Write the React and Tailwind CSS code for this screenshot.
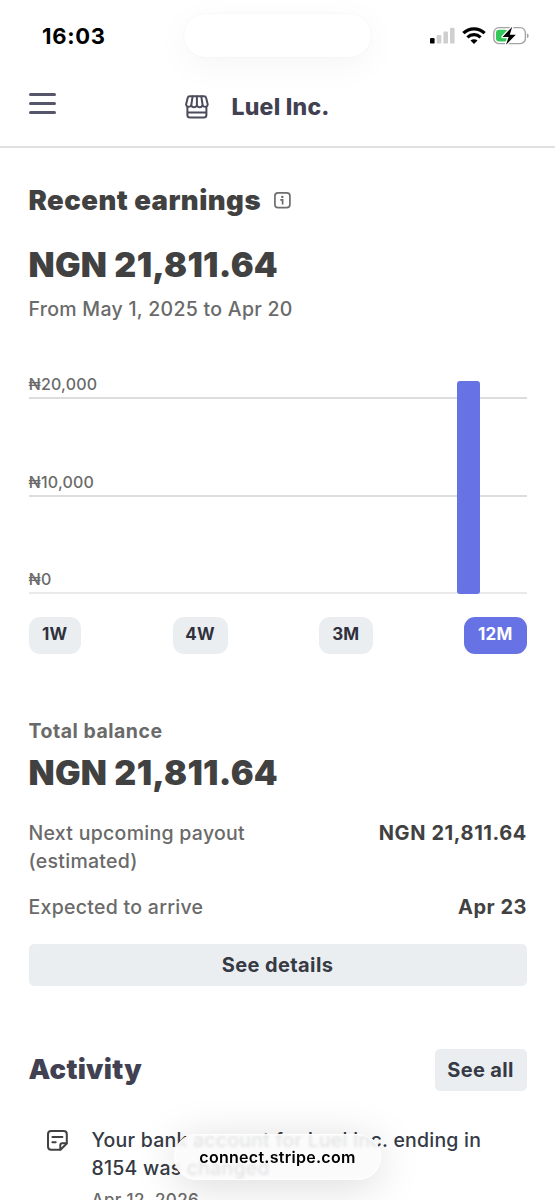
const ranges = ['1W', '4W', '3M', '12M']

const chipWidths = {
  '1W': 'w-[52.5px]',
  '4W': 'w-[55px]',
  '3M': 'w-[53.5px]',
  '12M': 'w-[62.5px]'
}

const gridLines = [
  { label: '₦20,000', color: 'border-[#dcddde]' },
  { label: '₦10,000', color: 'border-[#dcddde]' },
  { label: '₦0', color: 'border-[#e8e9ea]' }
]

const SignalIcon = () => (
  <svg width="25" height="17" viewBox="0 0 25 17">
    <rect x="0" y="11" width="4.6" height="5.6" rx="1.2" fill="#000" />
    <rect x="6.7" y="8" width="4.6" height="8.6" rx="1.2" fill="#cfcfcf" />
    <rect x="13.4" y="4.5" width="4.6" height="12.1" rx="1.2" fill="#cfcfcf" />
    <rect x="20" y="0.8" width="4.6" height="15.8" rx="1.2" fill="#cfcfcf" />
  </svg>
)

const WifiIcon = () => (
  <svg width="24" height="17" viewBox="0 0 24 17" fill="none" stroke="#000">
    <path d="M1.4 6.1a15.2 15.2 0 0 1 21.2 0" strokeWidth="3.3" />
    <path d="M5.4 10.3a9.5 9.5 0 0 1 13.200 0" strokeWidth="3.1" />
    <path d="M8.5 13.6a5 5 0 0 1 7 0L12 17z" fill="#000" stroke="none" />
  </svg>
)

const BatteryIcon = () => (
  <svg width="37" height="20" viewBox="0 0 37 20">
    <rect x="0.8" y="1.6" width="31.6" height="16" rx="5.2" fill="#fff" stroke="#a3a3a3" strokeWidth="1.4" />
    <rect x="3" y="3.8" width="12" height="11.6" rx="3.2" fill="#34c759" />
    <path d="M34.2 7.4c1.8.5 1.8 4.2 0 4.7z" fill="#8f8f8f" />
    <path
      d="M19.2 0.8 9.6 10.9h6l-2.6 7.9 9.8-10.1h-6z"
      fill="#000"
      stroke="#fff"
      strokeWidth="2.6"
      strokeLinejoin="round"
      paintOrder="stroke"
    />
  </svg>
)

const StoreIcon = () => (
  <svg width="24" height="24" viewBox="0 0 24 24" fill="none" stroke="#4b4b5c" strokeWidth="2" strokeLinecap="round" strokeLinejoin="round">
    <path d="M4.8 1.2H19c1.2 0 1.9.6 2.1 1.600l1.500 6.100c.4 1.600-.8 2.900-2.500 2.900-1.300 0-2.100-.6-2.500-1.500-.6 1.300-1.600 2-2.800 2s-2.200-.7-2.900-1.900c-.7 1.200-1.700 1.900-2.900 1.900s-2.200-.7-2.800-2c-.4.9-1.200 1.500-2.500 1.500-1.700 0-2.900-1.300-2.500-2.900l1.500-6.100c.2-1 .9-1.600 2.100-1.600z" />
    <path d="M7.600 1.400 6.300 10M11.900 1.400v9M16.300 1.400l1.300 8.600" />
    <path d="M2.400 12v8c0 1.600 1 2.600 2.600 2.600h13.800c1.600 0 2.600-1 2.600-2.600v-8M2.600 17.600h18.600" />
  </svg>
)

const InfoIcon = () => (
  <svg width="17" height="17" viewBox="0 0 17 17" fill="none">
    <rect x="0.9" y="0.9" width="15" height="14.8" rx="3.2" stroke="#6e6e6e" strokeWidth="1.7" />
    <circle cx="8.3" cy="4.9" r="1.2" fill="#6a6a6a" />
    <path d="M6.3 7.9h2.300v4.700" stroke="#6a6a6a" strokeWidth="1.7" />
  </svg>
)

const NoteIcon = () => (
  <svg width="21" height="21" viewBox="0 0 21 21" fill="none" stroke="#414141" strokeWidth="2" strokeLinecap="round" strokeLinejoin="round">
    <path d="M4.200 1h12.400c1.900 0 3.200 1.300 3.200 3.200v9.300l-6.300 6.300H4.200C2.300 19.800 1 18.500 1 16.600V4.200C1 2.300 2.300 1 4.200 1z" />
    <path d="M19.600 13.200h-4.400c-1.200 0-1.900.7-1.900 1.900v4.400M5.400 7h10M5.400 12.200h3.300" />
  </svg>
)

const StatusBar = () => (
  <div className="flex h-[71px] items-center justify-between pl-[42px] pr-[25px]">
    <span className="text-[22px] font-bold leading-none tracking-[0.7px] text-black">16:03</span>
    <div className="flex items-center">
      <SignalIcon />
      <div className="ml-[7px]">
        <WifiIcon />
      </div>
      <div className="ml-[7px]">
        <BatteryIcon />
      </div>
    </div>
  </div>
)

const TopNav = () => (
  <div className="flex h-[77px] items-start border-b-2 border-[#dfe0e1] pl-[29px]">
    <button className="mt-[22px] flex w-[27px] flex-col gap-[6px]">
      <span className="h-[3px] w-full rounded-full bg-[#56566a]" />
      <span className="h-[3px] w-full rounded-full bg-[#56566a]" />
      <span className="h-[3px] w-full rounded-full bg-[#56566a]" />
    </button>
    <div className="ml-[129px] mt-[23px] flex h-[25px] items-center">
      <StoreIcon />
      <span className="ml-[22.5px] mt-[2px] text-[23px] font-extrabold leading-none tracking-[0.25px] text-[#414152]">
        Luel Inc.
      </span>
    </div>
  </div>
)

const EarningsChart = () => (
  <div className="relative mt-[27px]">
    {gridLines.map(line => (
      <div key={line.label} className={`flex h-[97.5px] items-end border-b-2 ${line.color} first:h-[49px]`}>
        <span className="pb-[2px] text-[16px] font-medium leading-[22px] tracking-[0.2px] text-[#6a6a6a]">{line.label}</span>
      </div>
    ))}
    <div className="absolute bottom-0 right-[47px] h-[213.5px] w-[22.5px] rounded-[3px] bg-[#6772e5]" />
  </div>
)

const Earnings = () => (
  <section className="pt-[34px]">
    <div className="flex h-[37px] items-center">
      <h1 className="text-[27.5px] font-black leading-none tracking-[0.47px] text-[#414141]">Recent earnings</h1>
      <div className="ml-[12.5px]">
        <InfoIcon />
      </div>
    </div>
    <p className="mt-[28px] text-[34px] font-black leading-[36px] tracking-[0.28px] text-[#414141]">NGN 21,811.64</p>
    <p className="mt-[11.5px] text-[19.5px] font-[450] leading-[28px] tracking-[0.28px] text-[#6a6a6a]">From May 1, 2025 to Apr 20</p>
    <div className="h-[0.5px]" />
    <EarningsChart />
    <div className="mt-[22.5px] flex justify-between">
      {ranges.map(range => (
        <button
          key={range}
          className={`h-[37px] rounded-[11px] text-[17px] font-bold tracking-[0.2px] ${chipWidths[range]} ${
            range === '12M' ? 'bg-[#6772e5] text-white' : 'bg-[#ebeef1] text-[#30313d]'
          }`}
        >
          {range}
        </button>
      ))}
    </div>
  </section>
)

const Balance = () => (
  <section className="pt-[63px]">
    <h2 className="text-[19.5px] font-bold leading-[28px] tracking-[0.5px] text-[#6a6a6a]">Total balance</h2>
    <p className="mt-[10px] text-[34px] font-black leading-[36px] tracking-[0.28px] text-[#414141]">NGN 21,811.64</p>
    <div className="mt-[28px] flex justify-between text-[19.5px] leading-[28.5px]">
      <p className="w-[240px] font-[450] tracking-[0.28px] text-[#6a6a6a]">Next upcoming payout (estimated)</p>
      <p className="mr-[-0.5px] text-[20px] font-bold tracking-[0.6px] text-[#414141]">NGN 21,811.64</p>
    </div>
    <div className="mt-[17px] flex justify-between text-[19.5px] leading-[28.5px]">
      <p className="font-[450] tracking-[0.28px] text-[#6a6a6a]">Expected to arrive</p>
      <p className="mr-[-0.5px] text-[20px] font-bold tracking-[0.5px] text-[#414141]">Apr 23</p>
    </div>
    <button className="mt-[22.5px] h-[42.5px] w-full rounded-[5px] bg-[#ebeef1] text-[20px] font-bold tracking-[0.4px] text-[#353a44]">
      See details
    </button>
  </section>
)

const Activity = () => (
  <section className="pt-[62.5px]">
    <div className="flex items-center justify-between">
      <h2 className="text-[27.5px] font-black leading-none tracking-[0.3px] text-[#414152]">Activity</h2>
      <button className="h-[42.5px] w-[92px] rounded-[5px] bg-[#ebeef1] text-[20px] font-bold tracking-[0.35px] text-[#353a44]">
        See all
      </button>
    </div>
    <div className="mt-[34.5px] flex pl-[18px]">
      <div className="mt-[4px]">
        <NoteIcon />
      </div>
      <div className="ml-[24px] w-[420px]">
        <p className="text-[19.5px] font-[450] leading-[28.5px] tracking-[0.22px] text-[#353a44]">
          Your bank account for Luel Inc. ending in 8154 was changed
        </p>
        <p className="mt-[5px] text-[17px] font-[450] leading-[24px] tracking-[0.35px] text-[#6a6a6a]">Apr 12, 2026</p>
      </div>
    </div>
  </section>
)

const App = () => (
  <div className="relative h-[1200px] w-[555px] overflow-hidden bg-white font-['Inter',sans-serif] text-[#414141]">
    {/* dynamic island */}
    <div className="absolute left-[184px] top-[14px] h-[43px] w-[187px] rounded-full bg-white shadow-[0_8px_36px_rgba(0,0,0,0.045),0_0_2px_rgba(0,0,0,0.06)]" />
    <StatusBar />
    <TopNav />
    <main className="px-[28.5px]">
      <Earnings />
      <Balance />
      <Activity />
    </main>
    {/* browser address pill */}
    <div className="absolute left-[174px] top-[1134px] flex h-[46px] w-[207px] items-center justify-center rounded-full bg-[#fafafa]/88 shadow-[0_6px_44px_rgba(0,0,0,0.15),inset_0_0_2px_1px_#fff] backdrop-blur-[1.5px]">
      <span className="text-[16px] font-semibold tracking-[0.28px] text-black">connect.stripe.com</span>
    </div>
  </div>
)

export default App
